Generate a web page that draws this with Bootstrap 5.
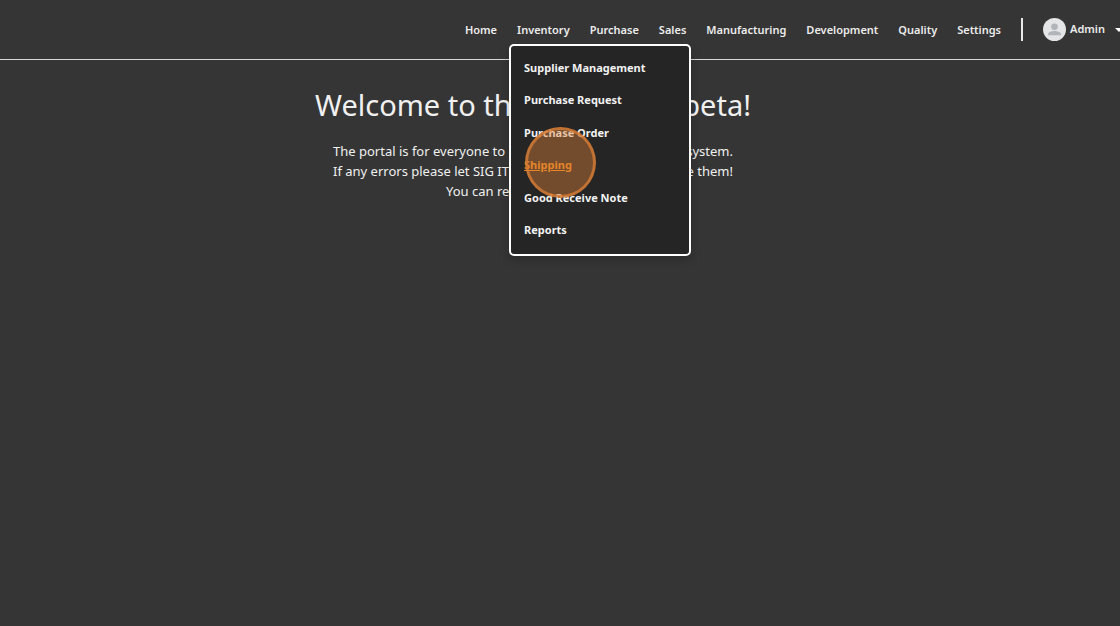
<!DOCTYPE html>
<html lang="en">
<head>
<meta charset="utf-8">
<meta name="viewport" content="width=device-width, initial-scale=1">
<title>Portal</title>
<link href="https://cdn.jsdelivr.net/npm/bootstrap@5.3.0/dist/css/bootstrap.min.css" rel="stylesheet">
<style>
body{background:#353535;color:#f0f0f0;font-family:"Noto Sans",sans-serif;font-size:13px;line-height:20px;min-height:100vh;overflow-x:hidden}
.topbar{height:60px;border-bottom:1px solid #d8d8d8}
.topbar .nav{gap:20px;font-size:11px;line-height:18px}
.topbar .nav-link{padding:0;color:#ececec;font-weight:600}
.rule{width:2px;height:23px;background:#e8e8e8}
.user{gap:4px;font-size:11px;font-weight:600;color:#ececec;margin-right:-3px}
.user .caret{margin-left:6px}
.portal-menu{display:grid;grid-template-rows:repeat(6,1fr);top:23px;left:-8px;width:182px;height:212px;margin:0;padding:6px 0 7px;background:#252525;border:2px solid #fff;border-radius:5px;box-shadow:0 4px 8px rgba(0,0,0,.2)}
.portal-menu .dropdown-item{display:flex;align-items:center;height:100%;padding:0 13px;color:#f2f2f2;font-size:11px;font-weight:700}
.portal-menu .dropdown-item:hover{background:none}
.portal-menu .current{color:#e8851c;text-decoration:underline}
.click-mark{left:14px;top:81px;width:71px;height:71px;border-radius:50%;border:3px solid rgba(214,124,52,.8);background:rgba(224,132,60,.42);pointer-events:none}
.welcome{padding:24px 54px 0 0}
.welcome h1{width:436px;font-size:29px;font-weight:400;line-height:42px;margin-bottom:15px}
.intro{width:400px}
.note{width:174px}
</style>
</head>
<body>
<header class="topbar d-flex align-items-center justify-content-end">
  <nav class="nav flex-nowrap align-items-center" aria-label="Main">
    <a class="nav-link" href="#">Home</a>
    <div class="position-relative">
      <a class="nav-link" href="#" aria-expanded="true">Inventory</a>
      <ul class="portal-menu list-unstyled position-absolute z-3">
        <li><a class="dropdown-item" href="#">Supplier Management</a></li>
        <li><a class="dropdown-item" href="#">Purchase Request</a></li>
        <li><a class="dropdown-item" href="#">Purchase Order</a></li>
        <li><a class="dropdown-item current" href="#">Shipping</a></li>
        <li><a class="dropdown-item" href="#">Good Receive Note</a></li>
        <li><a class="dropdown-item" href="#">Reports</a></li>
        <li class="click-mark position-absolute" aria-hidden="true"></li>
      </ul>
    </div>
    <a class="nav-link" href="#">Purchase</a>
    <a class="nav-link" href="#">Sales</a>
    <a class="nav-link" href="#">Manufacturing</a>
    <a class="nav-link" href="#">Development</a>
    <a class="nav-link" href="#">Quality</a>
    <a class="nav-link" href="#">Settings</a>
    <span class="rule"></span>
    <button class="user btn p-0 border-0 d-flex align-items-center" type="button">
      <svg width="23" height="23" viewBox="0 0 23 23" aria-hidden="true"><circle cx="11.500" cy="11.500" r="11.500" fill="#e4e5e7"/><circle cx="11.500" cy="8.700" r="3.300" fill="#b1b4b8"/><path d="M5 17.200v-1c0-2.300 4-3.300 6.500-3.300s6.500 1 6.500 3.300v1z" fill="#b1b4b8"/></svg>
      <span>Admin</span>
      <svg class="caret" width="8" height="4" viewBox="0 0 8 4" aria-hidden="true"><path d="M0 0h8L4 4z" fill="#fff"/></svg>
    </button>
  </nav>
</header>
<main class="welcome d-flex flex-column align-items-center text-nowrap">
  <h1 class="d-flex justify-content-between"><span>Welcome to the</span><span>beta!</span></h1>
  <div class="intro d-flex justify-content-between"><span>The portal is for everyone to</span><span>system.</span></div>
  <div class="intro d-flex justify-content-between"><span>If any errors please let SIG IT</span><span>resolve them!</span></div>
  <div class="note">You can report</div>
</main>
<script src="https://cdn.jsdelivr.net/npm/bootstrap@5.3.0/dist/js/bootstrap.bundle.min.js"></script>
</body>
</html>
